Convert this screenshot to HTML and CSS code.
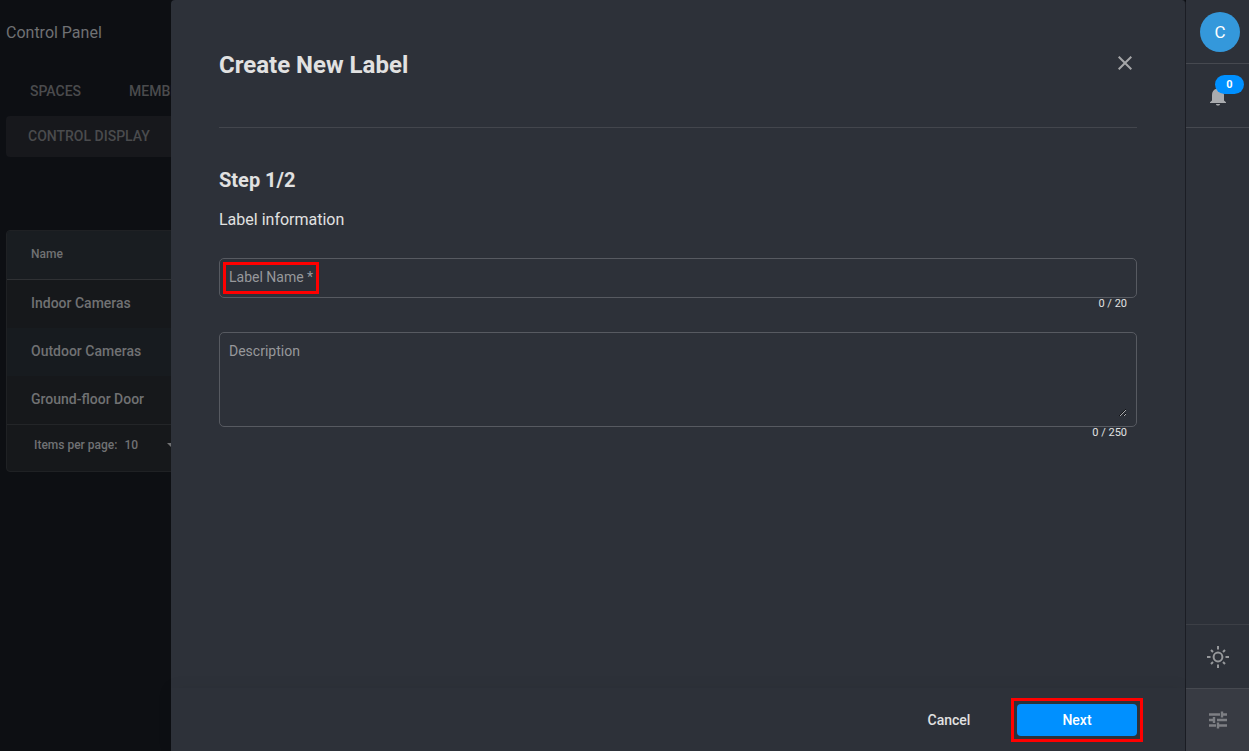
FILE: index.html
```html
<!DOCTYPE html>
<html lang="en">
<head>
  <meta charset="UTF-8">
  <meta name="viewport" content="width=device-width, initial-scale=1">
  <title>Control Panel</title>
  <link rel="stylesheet" href="styles.css">
</head>
<body>
  <div class="workspace">
    <main class="page">
      <h1>Control Panel</h1>
      <nav class="tabs">
        <a href="#spaces">Spaces</a>
        <a href="#members">Members</a>
      </nav>
      <nav class="subtabs">
        <a href="#display">Control display</a>
      </nav>
      <div class="table-card">
        <table>
          <thead>
            <tr><th>Name</th></tr>
          </thead>
          <tbody>
            <tr><td>Indoor Cameras</td></tr>
            <tr><td>Outdoor Cameras</td></tr>
            <tr><td>Ground-floor Door</td></tr>
          </tbody>
        </table>
        <div class="paginator">
          <label for="pageSize">Items per page:</label>
          <div class="select">
            <select id="pageSize">
              <option>10</option>
            </select>
            <svg width="10" height="5" viewBox="0 0 10 5"><path d="M0 0h10L5 5z" fill="currentColor"/></svg>
          </div>
        </div>
      </div>
    </main>

    <form class="drawer" onsubmit="return false">
      <div class="drawer-body">
        <header class="drawer-header">
          <h2>Create New Label</h2>
          <button type="button" class="close" aria-label="Close">
            <svg width="14" height="14" viewBox="0 0 14 14"><path d="M0.7 0.7l12.6 12.6M13.3 0.7L0.7 13.3" stroke="currentColor" stroke-width="2" fill="none"/></svg>
          </button>
        </header>
        <h3>Step 1/2</h3>
        <p class="subtitle">Label information</p>
        <div class="field">
          <input type="text" id="labelName" maxlength="20" required>
          <label for="labelName" class="highlight">Label Name *</label>
        </div>
        <div class="counter">0 / 20</div>
        <div class="field field-area">
          <textarea id="description" maxlength="250"></textarea>
          <label for="description">Description</label>
        </div>
        <div class="counter">0 / 250</div>
      </div>
      <footer class="drawer-footer">
        <button type="button" class="btn">Cancel</button>
        <div class="next-wrap highlight">
          <button type="submit" class="btn btn-primary">Next</button>
        </div>
      </footer>
    </form>
  </div>

  <aside class="rail">
    <button class="rail-item rail-user" aria-label="Account"><span class="avatar">C</span></button>
    <button class="rail-item" aria-label="Notifications">
      <svg width="24" height="24" viewBox="0 0 24 24" fill="#a9abae"><path d="M12 21.5c1.1 0 2-.7 2-1.6h-4c0 .9.9 1.6 2 1.6zM18 16.5V11c0-3.1-1.6-5.6-4.5-6.3V4c0-.8-.7-1.5-1.5-1.5s-1.5.7-1.5 1.5v.7C7.600 5.400 6 7.900 6 11v5.500l-2 1.700V19h16v-.8z"/></svg>
      <span class="badge">0</span>
    </button>
    <div class="rail-bottom">
      <button class="rail-item" aria-label="Theme">
        <svg width="24" height="24" viewBox="0 0 24 24" fill="none" stroke="#96989b" stroke-width="2"><circle cx="12" cy="12" r="4.4"/><path d="M12 1v3.500M12 19.500V23M1 12h3.500M19.500 12H23M5 5l2 2M17 17l2 2M5 19l2-2M17 7l2-2"/></svg>
      </button>
      <button class="rail-item active" aria-label="Control panel">
        <svg width="24" height="24" viewBox="0 0 24 24" fill="none" stroke="#7d7f84" stroke-width="2.4"><path d="M3 6.500h11M16 6.500h5M16 3.500v6M3 12h5M11 12h10M8 9v6M3 17.500h7M12 17.500h9M12 14.500v6"/></svg>
      </button>
    </div>
  </aside>
</body>
</html>
```

FILE: styles.css
```css
* {
  box-sizing: border-box;
}
body {
  font-family: Roboto, "Liberation Sans", Arial, sans-serif;
  font-size: 14px;
  margin: 0;
  height: 100vh;
  display: flex;
  overflow: hidden;
  background: #0d0f13;
  color: #e1e1e1;
}
button,
input,
textarea,
select {
  font: inherit;
  color: inherit;
  background: none;
  border: none;
  padding: 0;
  margin: 0;
  outline: none;
}
button {
  cursor: pointer;
}

/* page behind the drawer */
.workspace {
  position: relative;
  flex: 1;
  min-width: 0;
  overflow: hidden;
}
.page {
  padding: 0 6px;
  color: #707173;
}
h1 {
  margin: 0;
  font-size: 16px;
  font-weight: 400;
  line-height: 66px;
}
.tabs,
.subtabs {
  display: flex;
  text-transform: uppercase;
  font-weight: 500;
}
.tabs a,
.subtabs a {
  color: #4a4b4d;
  text-decoration: none;
}
.tabs {
  padding: 5px 24px;
  gap: 48px;
  line-height: 40px;
}
.subtabs {
  padding: 0 22px;
  line-height: 41px;
  background: #17181c;
  border-radius: 4px;
}
.table-card {
  margin-top: 73px;
  background: #16181b;
  border: 1px solid #1f2124;
  border-radius: 4px;
  overflow: hidden;
}
table {
  width: 100%;
  border-collapse: separate;
  border-spacing: 0;
}
th,
td {
  height: 48px;
  padding: 0 24px 2px;
  text-align: left;
  font-weight: 500;
}
th {
  height: 49px;
  font-size: 12px;
  background: #191d21;
  border-bottom: 1px solid #2f3134;
}
tbody tr:nth-child(even) {
  background: #171b1f;
}
.paginator {
  display: flex;
  gap: 7px;
  height: 47px;
  padding: 0 27px 6px;
  align-items: center;
  border-top: 1px solid #232528;
  font-size: 12px;
  font-weight: 500;
}
.select {
  display: flex;
  align-items: center;
  width: 53px;
}
.select select {
  flex: 1;
  appearance: none;
}

/* drawer */
.drawer {
  position: absolute;
  inset: 0 0 0 171px;
  display: flex;
  flex-direction: column;
  background: #2d3139;
  border-right: 1px solid #1b1d24;
  border-radius: 4px 4px 0 0;
}
.drawer-body {
  flex: 1;
  padding: 0 48px;
}
.drawer-header {
  display: flex;
  align-items: center;
  justify-content: space-between;
  height: 128px;
  border-bottom: 1px solid #43464d;
}
h2 {
  margin: 0;
  padding-top: 2px;
  font-size: 24px;
  font-weight: 700;
}
.close {
  display: flex;
  padding: 4px 5px 6px;
  color: #a5a6a8;
}
h3 {
  margin: 40px 0 0;
  font-size: 20px;
  font-weight: 700;
  line-height: 24px;
}
.subtitle {
  margin: 16px 0 26px;
  font-size: 16px;
  line-height: 24px;
}
.field {
  position: relative;
  border: 1px solid #575a61;
  border-radius: 5px;
}
.field input {
  display: block;
  width: 100%;
  height: 38px;
  padding: 0 10px;
}
.field label {
  position: absolute;
  top: 6px;
  left: 6px;
  padding: 0 3px 2px;
  line-height: 24px;
  color: #97989b;
}
.field-area {
  padding: 9px;
}
.field textarea {
  display: block;
  width: 100%;
  height: 75px;
  resize: vertical;
}
.counter {
  margin-bottom: 22px;
  padding-right: 10px;
  text-align: right;
  font-size: 11px;
  line-height: 12px;
}
.drawer-footer {
  display: flex;
  align-items: center;
  justify-content: flex-end;
  gap: 5px;
  height: 63px;
  padding: 0 45px;
  background: #2d3139;
  box-shadow: 0 0 16px rgba(0, 0, 0, 0.06);
}
.next-wrap {
  padding: 3px;
}
.btn {
  display: block;
  width: 120px;
  height: 32px;
  border-radius: 4px;
  font-weight: 500;
}
.btn-primary {
  background: #0090ff;
  color: #fff;
}
.highlight {
  outline: 3px solid #f00;
}

/* right icon rail */
.rail {
  display: flex;
  flex-direction: column;
  width: 63px;
  background: #2d3139;
}
.rail-item {
  position: relative;
  display: flex;
  align-items: center;
  justify-content: center;
  width: 100%;
  height: 64px;
  border-bottom: 1px solid #464950;
}
.rail-user {
  padding-left: 5px;
}
.avatar {
  width: 40px;
  height: 40px;
  border-radius: 50%;
  background: #3498db;
  color: #fff;
  font-size: 17px;
  line-height: 40px;
}
.badge {
  position: absolute;
  top: 11px;
  right: 5px;
  width: 29px;
  border-radius: 10px;
  background: #0090ff;
  color: #fff;
  font-size: 11px;
  font-weight: 700;
  line-height: 19px;
}
.rail-bottom {
  margin-top: auto;
  border-top: 1px solid #3c3f46;
}
.rail-bottom .active {
  height: 62px;
  border-bottom: none;
  background: #383b43;
}
```
